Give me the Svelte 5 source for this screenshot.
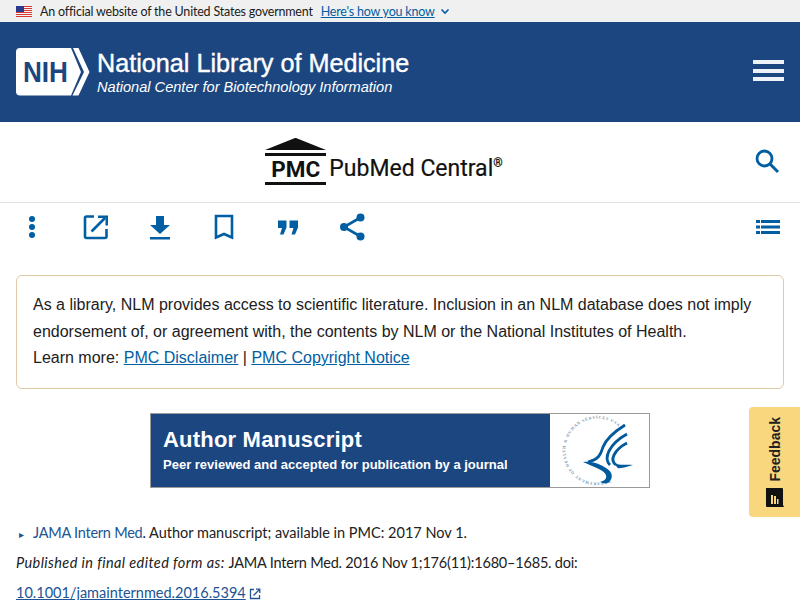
<script>
  const icon = '#005ea2';
</script>

<div class="page">
  <div class="gov">
    <svg class="flag" width="16" height="11" viewBox="0 0 16 11">
      <rect width="16" height="11" fill="#f4f4f4"/>
      <g fill="#d83933"><rect width="16" height="1"/><rect y="2" width="16" height="1"/><rect y="4" width="16" height="1"/><rect y="6" width="16" height="1"/><rect y="8" width="16" height="1"/><rect y="10" width="16" height="1"/></g>
      <rect width="8" height="6" fill="#2a3a8c"/>
    </svg>
    <span class="gov-text">An official website of the United States government</span>
    <span class="gov-link">Here's how you know</span>
    <svg width="10" height="7" viewBox="0 0 10 7"><path d="M1.5 1.5 5 5l3.5-3.5" fill="none" stroke="#005ea2" stroke-width="1.6"/></svg>
  </div>

  <header class="nlm">
    <div class="nlm-brand">
      <svg class="nih" width="75" height="48" viewBox="0 0 75 48">
        <path d="M4 0H55L65 24 55 47.500H4Q0 47.500 0 43.500V4Q0 0 4 0Z" fill="#fff"/>
        <path d="M57 0H62.500L73.500 24 62.500 47.500H56.500L68 24Z" fill="#fff"/>
        <text x="7" y="34" class="nih-text" textLength="45" lengthAdjust="spacingAndGlyphs">NIH</text>
      </svg>
      <div class="nlm-titles">
        <div class="nlm-title">National Library of Medicine</div>
        <div class="nlm-sub">National Center for Biotechnology Information</div>
      </div>
    </div>
    <div class="burger"><i></i><i></i><i></i></div>
  </header>

  <div class="pmc-bar">
    <div class="pmc-logo">
      <div class="pmc-mark">
        <div class="roof"></div>
        <div class="bar-line thin"></div>
        <div class="pmc-letters">PMC</div>
        <div class="bar-line"></div>
      </div>
      <div class="pmc-name">PubMed Central<sup>®</sup></div>
    </div>
    <svg class="search" width="28" height="28" viewBox="0 0 28 28">
      <circle cx="11.500" cy="11.500" r="7.500" fill="none" stroke={icon} stroke-width="2.800"/>
      <path d="M17 17l8 8" stroke={icon} stroke-width="3" fill="none"/>
    </svg>
  </div>

  <div class="actions">
    <div class="tools">
      <svg width="32" height="32" viewBox="0 0 32 32"><g fill={icon}><circle cx="16" cy="8" r="3"/><circle cx="16" cy="16" r="3"/><circle cx="16" cy="24" r="3"/></g></svg>
      <svg width="32" height="32" viewBox="0 0 32 32"><path d="M14 5.500H6.500Q5 5.500 5 7V25.500Q5 27 6.500 27H25Q26.500 27 26.500 25.500V18" fill="none" stroke={icon} stroke-width="2.600"/><path d="M11.500 20.500 25 7" stroke={icon} stroke-width="2.600" fill="none"/><path d="M18 4.500H28V14.500H25.500V7H18Z" fill={icon}/></svg>
      <svg width="32" height="32" viewBox="0 0 32 32"><path d="M12 5h8v9h6L16 23 6 14h6ZM6 26h20v2.500H6Z" fill={icon}/></svg>
      <svg width="32" height="32" viewBox="0 0 32 32"><path d="M8 5h16v21.500l-8-3.500-8 3.500Z" fill="none" stroke={icon} stroke-width="2.600"/></svg>
      <svg width="32" height="32" viewBox="0 0 32 32"><path d="M6 9.500h8.500v7L11.500 23.500H8L10 17H6ZM17.500 9.500H26v7L23 23.500H19.500L21.500 17H17.500Z" fill={icon}/></svg>
      <svg width="32" height="32" viewBox="0 0 32 32"><g fill={icon}><circle cx="24.500" cy="6.500" r="4"/><circle cx="8" cy="16" r="4"/><circle cx="24.500" cy="25.500" r="4"/></g><path d="M24.500 6.500 8 16 24.500 25.500" fill="none" stroke={icon} stroke-width="2.600"/></svg>
    </div>
    <svg width="28" height="28" viewBox="0 0 28 28"><g fill={icon}><rect x="1" y="7" width="4" height="3"/><rect x="6" y="7" width="19" height="3"/><rect x="1" y="12.500" width="4" height="3"/><rect x="6" y="12.500" width="19" height="3"/><rect x="1" y="18" width="4" height="3"/><rect x="6" y="18" width="19" height="3"/></g></svg>
  </div>

  <div class="notice">
    As a library, NLM provides access to scientific literature. Inclusion in an NLM database does not imply endorsement of, or agreement with, the contents by NLM or the National Institutes of Health.<br/>
    Learn more: <a href="#a">PMC Disclaimer</a> | <a href="#b">PMC Copyright Notice</a>
  </div>

  <div class="am-wrap">
    <div class="am">
      <div class="am-blue">
        <div class="am-title">Author Manuscript</div>
        <div class="am-sub">Peer reviewed and accepted for publication by a journal</div>
      </div>
      <div class="am-seal">
        <svg width="98" height="73" viewBox="0 0 98 73">
          <defs><path id="ring" d="M60 66A32 32 0 1 1 70 14"/></defs>
          <text class="ring-text"><textPath href="#ring" textLength="136">DEPARTMENT OF HEALTH &amp; HUMAN SERVICES USA</textPath></text>
          <g fill="none" stroke="#005a9c" stroke-width="2.800">
            <path d="M75 11C64 18 56 25 53 33C51 39 50 45 38 48"/>
            <path d="M77 20C68 25 62 31 59 37C56 43 56 47 60 51"/>
            <path d="M77 29C71 32 66 37 64 41C62 45 62 48 66 51"/>
          </g>
          <path d="M33 48C42 47 50 50 56 54C61 57 64 62 60 67C58 70 54 70 50 68C54 67 57 65 56 61C54 56 44 53 33 48Z" fill="#005a9c"/>
          <path d="M65 49C70 52 76 50 83 51C78 52 74 54 70 54C68 55 66 53 65 49Z" fill="#005a9c"/>
        </svg>
      </div>
    </div>
  </div>

  <div class="cite">
    <div class="cite-line"><span class="tri">▸</span><a class="plain" href="#c">JAMA Intern Med</a>. Author manuscript; available in PMC: 2017 Nov 1.</div>
    <div class="cite-line"><em>Published in final edited form as:</em> <span class="tight">JAMA Intern Med. 2016 Nov 1;176(11):1680–1685. doi:</span></div>
    <div class="cite-line"><a class="doi" href="#d">10.1001/jamainternmed.2016.5394</a>
      <svg width="12" height="12" viewBox="0 0 12 12"><path d="M5 1.500H1.500V10.500H10.500V7" fill="none" stroke="#205493" stroke-width="1.300"/><path d="M4.500 7.500 10 2M7 1.200H10.800V5" fill="none" stroke="#205493" stroke-width="1.300"/></svg>
    </div>
  </div>

  <div class="feedback">
    <span class="fb-text">Feedback</span>
    <svg width="19" height="20" viewBox="0 0 19 20"><path d="M1 0H17Q18 0 18 1V17L19 19H2Q1 19 1 18Z" fill="#111"/><path d="M6 7h2v9H6ZM9 8h2v8H9ZM12 11h1.500v5H12Z" fill="#f9d77e"/></svg>
  </div>
</div>

<style>
  :global(body) { margin: 0; background: #fff; }
  .page { width: 800px; height: 600px; overflow: hidden; position: relative; font-family: "Lato", sans-serif; color: #212121; }
  .gov { height: 22px; background: #f0f0f0; display: flex; align-items: center; padding-left: 16px; font-size: 12.500px; letter-spacing: -0.200px; box-sizing: border-box; }
  .flag { margin-right: 8px; }
  .gov-text { margin-right: 8px; color: #1b1b1b; }
  .gov-link { color: #005ea2; text-decoration: underline; margin-right: 5px; }
  .nlm { height: 100px; background: #1c4680; display: flex; align-items: center; justify-content: space-between; padding: 0 16px; box-sizing: border-box; }
  .nlm-brand { display: flex; align-items: center; gap: 6px; margin-top: -1px; }
  .nih { display: block; }
  .nih-text { font: 700 29px "Liberation Sans", sans-serif; fill: #1c4680; }
  .nlm-titles { font-family: "Liberation Sans", sans-serif; color: #fff; }
  .nlm-title { font-size: 25.200px; line-height: 30px; -webkit-text-stroke: 0.400px #fff; }
  .nlm-sub { font-size: 14.600px; font-style: italic; line-height: 18px; }
  .burger { display: flex; flex-direction: column; gap: 4.500px; width: 31px; margin-top: -3px; }
  .burger i { display: block; height: 4px; background: #eef2f8; }
  .pmc-bar { height: 81px; border-bottom: 1px solid #dfe1e2; box-sizing: border-box; display: flex; align-items: center; justify-content: center; position: relative; padding-right: 32px; }
  .pmc-logo { display: flex; align-items: flex-end; gap: 3px; margin-top: -2px; }
  .pmc-mark { width: 61px; display: flex; flex-direction: column; }
  .roof { height: 0; border-left: 30.500px solid transparent; border-right: 30.500px solid transparent; border-bottom: 12px solid #111; }
  .bar-line { height: 3px; background: #111; }
  .bar-line.thin { margin-top: 3px; }
  .pmc-letters { font: 700 22.500px/27px "Roboto", sans-serif; text-align: center; color: #111; height: 26px; }
  .pmc-name { font: 400 23px/26px "Roboto", sans-serif; color: #111; margin-bottom: 3px; white-space: nowrap; -webkit-text-stroke: 0.200px #111; }
  .pmc-name sup { font-size: 12px; line-height: 0; }
  .search { position: absolute; right: 19px; top: 25px; }
  .actions { height: 49px; display: flex; align-items: center; justify-content: space-between; padding: 0 17px 2px 16px; box-sizing: border-box; }
  .tools { display: flex; gap: 32px; }
  .tools svg { display: block; }
  .notice { margin: 23px 16px 0; border: 1px solid #e0c9a6; border-radius: 6px; padding: 16px 16px 16px; font: 16px/26.500px "Liberation Sans", sans-serif; color: #212121; height: 114px; box-sizing: border-box; }
  .notice a { color: #005ea2; text-decoration: underline; }
  .am-wrap { display: flex; justify-content: center; margin-top: 24px; }
  .am { width: 500px; height: 75px; box-sizing: border-box; border: 1px solid #9a9a9a; display: flex; background: #fff; }
  .am-blue { width: 399px; flex: none; background: #1c4680; color: #fff; font-family: "Liberation Sans", sans-serif; padding: 13px 12px 0; box-sizing: border-box; }
  .am-title { font-size: 22px; font-weight: 700; line-height: 26px; letter-spacing: 0.200px; }
  .am-sub { font-size: 13px; font-weight: 700; line-height: 18px; margin-top: 3px; }
  .am-seal { flex: 1; }
  .am-seal svg { display: block; overflow: hidden; }
  .ring-text { font: 700 4px "Liberation Serif", serif; fill: #6f8fae; }
  .cite { margin: 30px 16px 0; font-size: 14.500px; color: #212121; }
  .cite-line { height: 30px; line-height: 30px; white-space: nowrap; }
  .cite em { letter-spacing: 0.400px; }
  .tight { letter-spacing: -0.200px; }
  .tri { color: #205493; font-size: 10px; margin: 0 9px 0 3px; }
  .plain { color: #205493; text-decoration: none; letter-spacing: -0.250px; }
  .doi { color: #205493; text-decoration: underline; }
  .cite svg { vertical-align: -2px; }
  .feedback { position: absolute; right: 0; top: 407px; width: 51px; height: 110px; background: #f9d77e; border-radius: 4px 0 0 4px; display: flex; flex-direction: column; align-items: center; padding: 10px 0 0; box-sizing: border-box; gap: 6px; }
  .fb-text { writing-mode: vertical-rl; transform: rotate(180deg); font: 700 14px "Liberation Sans", sans-serif; color: #212121; }
</style>
